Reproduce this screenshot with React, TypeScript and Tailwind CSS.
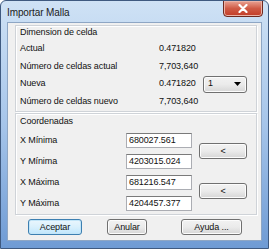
import React from "react";

const Label = ({ children, w }: { children: React.ReactNode; w: string }) => (
  <span className={`${w} shrink-0 whitespace-nowrap`}>{children}</span>
);

const WinButton = ({
  children,
  className = "",
  primary = false,
}: {
  children: React.ReactNode;
  className?: string;
  primary?: boolean;
}) => (
  <button
    className={
      "h-[16px] rounded-[3px] border text-[9px] leading-none flex items-center justify-center " +
      (primary
        ? "border-[#3c7fb1] bg-gradient-to-b from-[#eaf6fd] via-[#d9f0fc] to-[#bee6fd] shadow-[inset_0_0_0_1px_#c2e5f8] "
        : "border-[#707070] bg-gradient-to-b from-[#f2f2f2] via-[#ebebeb] to-[#d6d6d6] shadow-[inset_0_0_0_1px_#fcfcfc] ") +
      className
    }
  >
    {children}
  </button>
);

const TextBox = ({ value }: { value: string }) => (
  <div className="w-[66px] h-[15px] bg-white border border-[#abadb3] border-t-[#7a7a7a] text-[9px] leading-[13px] pl-[2px] text-[#111]">
    {value}
  </div>
);

const coords = [
  { label: "X Mínima", value: "680027.561" },
  { label: "Y Mínima", value: "4203015.024" },
  { label: "X Máxima", value: "681216.547" },
  { label: "Y Máxima", value: "4204457.377" },
];

export default function App() {
  return (
    <div
      className="w-[269px] h-[249px] relative rounded-t-[6px] border border-[#3f5a80] bg-gradient-to-b from-[#cfe2f5] via-[#a6c5ea] to-[#6f9bd4] text-[9px] tracking-[-0.1px] text-[#111] overflow-hidden"
      style={{ fontFamily: '"Liberation Sans", Arial, sans-serif' }}
    >
      {/* title bar */}
      <div className="h-[21px] flex items-center pl-[6px] pt-[2px] text-[10px] text-[#1b1b1b]">
        Importar Malla
      </div>
      <div className="absolute top-[-1px] right-[5px] w-[40px] h-[17px] rounded-b-[4px] border border-[#6e2a20] bg-gradient-to-b from-[#e8a294] via-[#cf5a45] to-[#c23b26] flex items-center justify-center shadow-[inset_0_0_0_1px_#eab2a6]">
        <svg width="10" height="9" viewBox="0 0 10 9">
          <path d="M1.5 1 L8.5 8 M8.5 1 L1.5 8" stroke="#fff" strokeWidth="2.2" strokeLinecap="round" />
        </svg>
      </div>

      {/* client area */}
      <div className="mx-[6px] h-[219px] bg-[#f0f0f0] border border-[#8ea6c4] pt-[2px]">
        {/* Dimension de celda */}
        <div className="ml-[7px] w-[242px] border border-[#cfd3d8] shadow-[inset_1px_1px_0_#fff,1px_1px_0_#fff] pl-[4px] pb-[1px]">
          <div className="h-[14px] flex items-center">Dimension de celda</div>
          <div className="h-[18px] flex items-center">
            <Label w="w-[139px]">Actual</Label>
            <span>0.471820</span>
          </div>
          <div className="h-[17px] flex items-center">
            <Label w="w-[139px]">Número de celdas actual</Label>
            <span>7,703,640</span>
          </div>
          <div className="h-[18px] flex items-center">
            <Label w="w-[139px]">Nueva</Label>
            <span className="w-[44px]">0.471820</span>
            <div className="w-[44px] h-[17px] rounded-[3px] border border-[#707070] bg-gradient-to-b from-[#f2f2f2] via-[#ebebeb] to-[#d6d6d6] shadow-[inset_0_0_0_1px_#fcfcfc] flex items-center justify-between pl-[4px] pr-[5px]">
              <span>1</span>
              <svg width="7" height="4" viewBox="0 0 7 4">
                <path d="M0 0 H7 L3.5 4 Z" fill="#000" />
              </svg>
            </div>
          </div>
          <div className="h-[17px] flex items-center">
            <Label w="w-[139px]">Número de celdas nuevo</Label>
            <span>7,703,640</span>
          </div>
        </div>

        {/* Coordenadas */}
        <div className="mt-[1px] ml-[7px] w-[242px] border border-[#cfd3d8] shadow-[inset_1px_1px_0_#fff,1px_1px_0_#fff] pl-[4px] flex flex-col">
          <div className="h-[16px] flex items-center">Coordenadas</div>
          <div className="flex">
            <div className="flex flex-col">
              {coords.map((c) => (
                <div key={c.label} className="h-[21px] flex items-center">
                  <Label w="w-[106px]">{c.label}</Label>
                  <TextBox value={c.value} />
                </div>
              ))}
            </div>
            <div className="ml-[7px] flex flex-col">
              <WinButton className="w-[48px] mt-[13px]">&lt;</WinButton>
              <WinButton className="w-[48px] mt-[24px]">&lt;</WinButton>
            </div>
          </div>
        </div>

        {/* buttons */}
        <div className="mt-[4px] flex items-center">
          <WinButton primary className="ml-[20px] w-[54px]">Aceptar</WinButton>
          <WinButton className="ml-[25px] w-[40px]">Anular</WinButton>
          <WinButton className="ml-[34px] w-[61px]">Ayuda ...</WinButton>
        </div>
      </div>
    </div>
  );
}
